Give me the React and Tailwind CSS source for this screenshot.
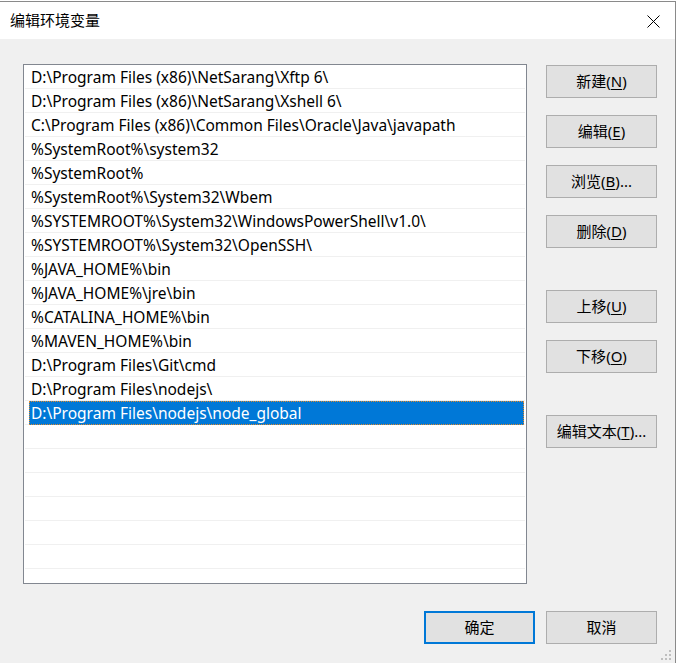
import React from "react";

const paths = [
  "D:\\Program Files (x86)\\NetSarang\\Xftp 6\\",
  "D:\\Program Files (x86)\\NetSarang\\Xshell 6\\",
  "C:\\Program Files (x86)\\Common Files\\Oracle\\Java\\javapath",
  "%SystemRoot%\\system32",
  "%SystemRoot%",
  "%SystemRoot%\\System32\\Wbem",
  "%SYSTEMROOT%\\System32\\WindowsPowerShell\\v1.0\\",
  "%SYSTEMROOT%\\System32\\OpenSSH\\",
  "%JAVA_HOME%\\bin",
  "%JAVA_HOME%\\jre\\bin",
  "%CATALINA_HOME%\\bin",
  "%MAVEN_HOME%\\bin",
  "D:\\Program Files\\Git\\cmd",
  "D:\\Program Files\\nodejs\\",
  "D:\\Program Files\\nodejs\\node_global",
];

const FONT = { fontFamily: '"Noto Sans", "Noto Sans CJK SC", sans-serif' };

function Btn({ label, mn, suffix = "", className = "", primary = false }) {
  return (
    <div
      className={
        "w-[111px] h-[33px] flex items-center justify-center bg-[#e1e1e1] text-[15px] text-black leading-none " +
        (primary ? "border-2 border-[#0078d7] " : "border border-[#adadad] ") +
        className
      }
    >
      <span>
        {label}
        {mn ? (
          <>
            (<span className="underline underline-offset-2">{mn}</span>)
          </>
        ) : null}
        {suffix}
      </span>
    </div>
  );
}

export default function App() {
  const rows = [];
  for (let i = 0; i < 22; i++) rows.push(paths[i] || "");
  return (
    <div className="w-[678px] h-[663px] bg-white overflow-hidden relative" style={FONT}>
      <div className="w-[676px] h-[662px] mt-px border-t border-r border-[#8a8a8a] flex flex-col">
        {/* Title bar */}
        <div className="h-[37px] bg-white flex items-center justify-between pl-[10px] pr-[15px] shrink-0">
          <span className="text-[15px] text-black" style={{ fontFamily: '"Noto Sans CJK SC", sans-serif' }}>
            编辑环境变量
          </span>
          <svg width="13" height="13" viewBox="0 0 13 13" className="mt-[1px]">
            <path d="M0.5 0.5 L12.5 12.5 M12.5 0.5 L0.5 12.5" stroke="#000" strokeWidth="1" />
          </svg>
        </div>
        {/* Body */}
        <div className="flex-1 bg-[#f0f0f0] flex flex-col relative">
          <div className="flex pt-[25px] pl-[23px] gap-[19px]">
            <div className="w-[504px] h-[520px] border border-[#828790] bg-white overflow-hidden px-px">
              {rows.map((p, i) => {
                const sel = i === 14;
                return (
                  <div key={i} className="h-[24px] border-b border-[#f0f0f0] flex">
                    <div
                      className={
                        "ml-[4px] flex-1 flex items-center pl-[2px] pt-[2px] text-[15.5px] leading-none whitespace-nowrap " +
                        (sel ? "bg-[#0078d7] text-white outline-1 outline-dotted outline-[#e08a2c] -outline-offset-1 -mb-px mr-px" : "text-black")
                      }
                    >
                      {p}
                    </div>
                  </div>
                );
              })}
            </div>
            <div className="flex flex-col pt-px">
              <Btn label="新建" mn="N" />
              <Btn label="编辑" mn="E" className="mt-[17px]" />
              <Btn label="浏览" mn="B" suffix="..." className="mt-[17px]" />
              <Btn label="删除" mn="D" className="mt-[17px]" />
              <Btn label="上移" mn="U" className="mt-[42px]" />
              <Btn label="下移" mn="O" className="mt-[17px]" />
              <Btn label="编辑文本" mn="T" suffix="..." className="mt-[42px]" />
            </div>
          </div>
          <div className="flex justify-end gap-[11px] pr-[18px] mt-[27px]">
            <Btn label="确定" primary />
            <Btn label="取消" />
          </div>
          <svg width="12" height="12" viewBox="0 0 12 12" className="absolute right-[3px] bottom-[1px]">
            <rect x="9" y="0" width="2" height="2" fill="#bfbfbf" />
            <rect x="5" y="4" width="2" height="2" fill="#bfbfbf" />
            <rect x="9" y="4" width="2" height="2" fill="#bfbfbf" />
            <rect x="1" y="8" width="2" height="2" fill="#bfbfbf" />
            <rect x="5" y="8" width="2" height="2" fill="#bfbfbf" />
            <rect x="9" y="8" width="2" height="2" fill="#bfbfbf" />
          </svg>
        </div>
      </div>
    </div>
  );
}
